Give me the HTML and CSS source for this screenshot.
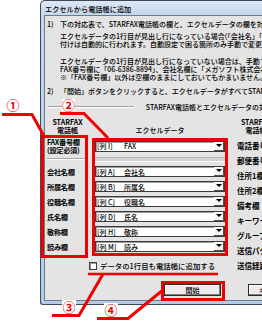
FILE: index.html
```html
<!DOCTYPE html>
<html lang="ja">
  <head>
    <meta charset="utf-8">
    <title>エクセルから電話帳に追加</title>
    <link rel="stylesheet" href="styles.css">
  </head>
  <body>
    <div class="window">
      <div class="titlebar">エクセルから電話帳に追加</div>
      <div class="client">
        <div class="step"><span class="num">1)</span>下の対応表で、STARFAX電話帳の欄と、エクセルデータの欄を対応付けてください。</div>
        <div class="note">
          <div>エクセルデータの1行目が見出し行になっている場合(「会社名」「FAX番号」など)、対応</div>
          <div>付けは自動的に行われます。自動設定で困る箇所のみ手動で変更してください。</div>
        </div>
        <div class="note spaced">
          <div>エクセルデータの1行目が見出し行になっていない場合は、手動で対応付けてください。</div>
          <div>FAX番号欄に「06-6386-8894」、会社名欄に「メガソフト株式会社」などが入るように</div>
          <div>※「FAX番号欄」以外は空欄のままにしておいてもかまいません。</div>
        </div>
        <div class="step second"><span class="num">2)</span>「開始」ボタンをクリックすると、エクセルデータがすべてSTARFAX電話帳に追加されます。</div>

        <div class="group">
          <span class="etch"></span>
          <span class="group-title">STARFAX電話帳とエクセルデータの対応表</span>
        </div>

        <div class="map">
          <div class="map-left">
            <div class="grid">
              <div class="head">STARFAX<br>電話帳</div>
              <div class="head low">エクセルデータ</div>

              <div class="label">FAX番号欄<br>(設定必須)</div>
              <div class="cell"><div class="combo"><span class="col">[列 I]</span><span class="val">FAX</span><span class="arrow"></span></div></div>

              <div class="rule"></div>
              <div class="rule band"></div>

              <div class="label">会社名欄</div>
              <div class="cell"><div class="combo"><span class="col">[列 A]</span><span class="val">会社名</span><span class="arrow"></span></div></div>
              <div class="label">所属名欄</div>
              <div class="cell"><div class="combo"><span class="col">[列 B]</span><span class="val">所属名</span><span class="arrow"></span></div></div>
              <div class="label">役職名欄</div>
              <div class="cell"><div class="combo"><span class="col">[列 C]</span><span class="val">役職名</span><span class="arrow"></span></div></div>
              <div class="label">氏名欄</div>
              <div class="cell"><div class="combo"><span class="col">[列 D]</span><span class="val">氏名</span><span class="arrow"></span></div></div>
              <div class="label">敬称欄</div>
              <div class="cell"><div class="combo"><span class="col">[列 H]</span><span class="val">敬称</span><span class="arrow"></span></div></div>
              <div class="label">読み欄</div>
              <div class="cell"><div class="combo"><span class="col">[列 M]</span><span class="val">読み</span><span class="arrow"></span></div></div>
            </div>
            <div class="check"><span class="box"></span>データの1行目も電話帳に追加する</div>
          </div>

          <div class="map-right">
            <div class="head">STARFAX<br>電話帳</div>
            <div class="rlabel">電話番号欄</div>
            <div class="rlabel">郵便番号欄</div>
            <div class="rlabel">住所1欄</div>
            <div class="rlabel">住所2欄</div>
            <div class="rlabel">備考欄</div>
            <div class="rlabel">キーワード欄</div>
            <div class="rlabel">グループ欄</div>
            <div class="rlabel">送信パターン欄</div>
            <div class="rlabel">送信経路欄</div>
          </div>
        </div>

        <div class="buttons">
          <button class="btn">開始</button>
          <button class="btn">キャンセル</button>
        </div>
      </div>
    </div>

    <!-- red annotations drawn over the dialog -->
    <svg class="marks" width="262" height="321" viewBox="0 0 262 321">
      <g fill="none" stroke="#f00000" stroke-width="3">
        <rect x="42.5" y="136.5" width="44" height="120"/>
        <rect x="93.5" y="139.5" width="133" height="115"/>
        <rect x="162.5" y="282.5" width="61" height="17"/>
        <polyline points="2,114.5 32,114.5 44,136"/>
        <polyline points="60,113.5 84,113.5 108,138"/>
        <polyline points="52,315.5 79,315.5 103,274"/>
        <polyline points="97,318.5 128,318.5 163,290"/>
        <line x1="88" y1="274" x2="218" y2="274" stroke-width="2.5"/>
      </g>
      <g fill="#fff">
        <rect x="62" y="99" width="13" height="12"/>
        <rect x="62" y="300" width="14" height="13"/>
        <rect x="104" y="303" width="14" height="13"/>
      </g>
      <g class="num-mark" fill="#f00000" text-anchor="middle">
        <text x="13" y="110">①</text>
        <text x="68.5" y="110">②</text>
        <text x="69" y="312">③</text>
        <text x="111" y="315">④</text>
      </g>
    </svg>
  </body>
</html>
```

FILE: styles.css
```css
*,
*::before,
*::after {
  box-sizing: border-box;
}

* {
  margin: 0;
}

html, body {
  width: 262px;
  height: 321px;
  overflow: hidden;
}

body {
  background: #fff;
  color: #000;
  font-family: "Noto Sans CJK JP", "DejaVu Sans", sans-serif;
  font-size: 7px;
  font-weight: 500;
  line-height: 8px;
  position: relative;
}

.window {
  margin-left: 40px;
  width: 240px;
  height: 305px;
  border: 1px solid #3b4a5a;
  border-right: none;
  border-radius: 5px 0 0 3px;
  background: linear-gradient(#dde8f4, #c4d7ec 14px, #b3cbe6);
  padding: 0 0 3px 3px;
  display: flex;
  flex-direction: column;
}

.titlebar {
  height: 14px;
  padding: 4px 0 0 1px;
  font-size: 7.2px;
  white-space: nowrap;
}

.client {
  flex: 1;
  background: #e4e4e4;
  border: 1px solid #6c7c8c;
  border-right: none;
  padding: 4px 0 0 2px;
  white-space: nowrap;
  overflow: hidden;
}

.step .num {
  display: inline-block;
  width: 13px;
}

.note {
  padding-left: 13px;
  margin-top: 4px;
}

.note.spaced {
  margin-top: 9px;
}

.step.second {
  margin-top: 6px;
}

.group {
  display: flex;
  align-items: center;
  margin-top: 8px;
  height: 8px;
}

.etch {
  width: 109px;
  height: 2px;
  border-top: 1px solid #a0a0a0;
  border-bottom: 1px solid #fff;
  margin: 0 12px 0 1px;
}

.map {
  display: flex;
  margin-top: 7px;
}

.grid {
  display: grid;
  grid-template-columns: 41px 130px;
  grid-template-rows: 20px 16px 10px repeat(6, 15px);
  column-gap: 7px;
}

.head {
  font-weight: bold;
  text-align: center;
}

.head.low {
  padding-top: 8px;
  font-weight: 500;
}

.label {
  font-size: 7.2px;
  font-weight: bold;
  display: flex;
  align-items: center;
  letter-spacing: -0.3px;
  line-height: 8px;
}

.cell {
  display: flex;
  align-items: center;
}

.combo {
  display: flex;
  align-items: center;
  width: 100%;
  height: 11px;
  background: #fff;
  border: 1px solid #3a3a3a;
  box-shadow: inset 1px 1px 0 #a0a0a0;
  padding-left: 1px;
}

.col {
  width: 27px;
  flex-shrink: 0;
}

.val {
  flex: 1;
}

.arrow {
  width: 10px;
  height: 9px;
  background: #f2f2f2;
  box-shadow: inset -1px -1px 0 #505050, inset 1px 1px 0 #fff;
  display: flex;
  justify-content: center;
  padding-top: 2px;
}

.arrow::after {
  content: "";
  border-top: 3px solid #000;
  border-left: 3px solid transparent;
  border-right: 3px solid transparent;
  height: 0;
}

.rule {
  display: flex;
  align-items: center;
}

.rule::after {
  content: "";
  flex: 1;
  height: 2px;
  border-top: 1px solid #a8a8a8;
  border-bottom: 1px solid #fff;
}

.rule.band::after {
  height: 5px;
  background: #d2d2d2;
  border-top: 1px solid #b0b0b0;
}

.check {
  display: flex;
  align-items: center;
  height: 11px;
  margin-top: 6px;
  padding-left: 42px;
  font-size: 7.4px;
}

.check .box {
  width: 8px;
  height: 8px;
  background: #fff;
  border: 1px solid #404040;
  box-shadow: inset 1px 1px 0 #999;
  margin-right: 3px;
}

.map-right {
  margin-left: 12px;
  display: flex;
  flex-direction: column;
}

.map-right .head {
  width: 38px;
  height: 20px;
}

.rlabel {
  height: 15px;
  display: flex;
  align-items: center;
  font-size: 7.5px;
  font-weight: bold;
}

.buttons {
  display: flex;
  gap: 27px;
  margin-top: 11px;
  padding-left: 117px;
}

.btn {
  width: 57px;
  height: 12px;
  padding: 0;
  font-family: inherit;
  font-size: 7px;
  font-weight: 500;
  line-height: 8px;
  color: #000;
  background: #ececec;
  border: 1px solid #2a2a2a;
  box-shadow: inset -1px -1px 0 #808080, inset 1px 1px 0 #fff;
  flex-shrink: 0;
}

.marks {
  position: absolute;
  left: 0;
  top: 0;
  pointer-events: none;
}

.num-mark {
  font-family: "Noto Sans CJK JP", "DejaVu Sans", sans-serif;
  font-size: 13px;
  font-weight: bold;
}
```
